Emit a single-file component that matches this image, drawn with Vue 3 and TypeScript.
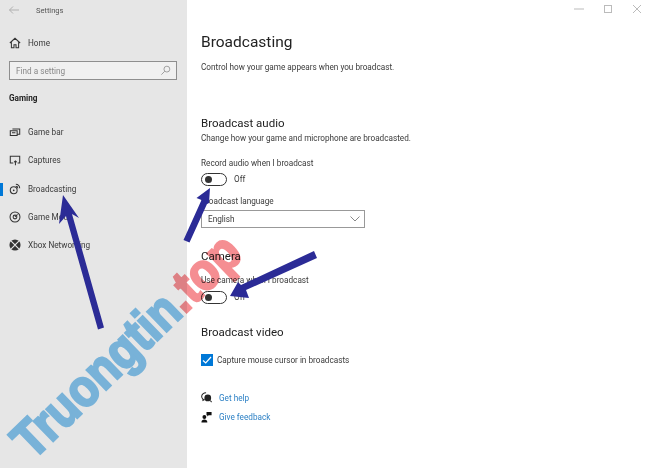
<template>
  <div class="window">
    <aside class="sidebar">
      <div class="titlebar">
        <svg class="back" width="12" height="10" viewBox="0 0 12 10"><path d="M11 5H1.500M5 1.500 1.500 5 5 8.500" fill="none" stroke="#b0b0b0" stroke-width="1"/></svg>
        <span class="app-name">Settings</span>
      </div>
      <div class="home-row">
        <svg class="nav-icon" width="12" height="12" viewBox="0 0 14 14"><path d="M1 7 7 1.500 13 7M2.800 6v6.500h3V9h2.400v3.500h3V6" fill="none" stroke="#333" stroke-width="1.200"/></svg>
        <span>Home</span>
      </div>
      <div class="search">
        <span>Find a setting</span>
        <svg width="11" height="11" viewBox="0 0 12 12"><circle cx="7.500" cy="4.500" r="3.200" fill="none" stroke="#999" stroke-width="1"/><path d="M5.200 6.800 1.500 10.500" stroke="#999" stroke-width="1"/></svg>
      </div>
      <div class="group">Gaming</div>
      <nav class="nav">
        <div v-for="item in navItems" :key="item.label" class="nav-row" :class="{ active: item.active }">
          <svg class="nav-icon" width="12" height="12" viewBox="0 0 14 14" v-html="item.icon"></svg>
          <span>{{ item.label }}</span>
        </div>
      </nav>
    </aside>

    <main class="content">
      <div class="controls">
        <svg width="10" height="10" viewBox="0 0 10 10"><path d="M0 5h10" stroke="#bbb"/></svg>
        <svg width="10" height="10" viewBox="0 0 10 10"><rect x="1.500" y="1.500" width="7" height="7" fill="none" stroke="#bbb"/></svg>
        <svg width="10" height="10" viewBox="0 0 10 10"><path d="M1 1l8 8M9 1 1 9" stroke="#bbb"/></svg>
      </div>
      <h1>Broadcasting</h1>
      <p class="lead">Control how your game appears when you broadcast.</p>

      <h2 class="audio-head">Broadcast audio</h2>
      <p class="small">Change how your game and microphone are broadcasted.</p>
      <p class="label record">Record audio when I broadcast</p>
      <div class="toggle-row">
        <span class="toggle"><i></i></span>
        <span>Off</span>
      </div>
      <p class="label language">Broadcast language</p>
      <div class="select">
        <span>English</span>
        <svg width="10" height="6" viewBox="0 0 10 6"><path d="M.5.500 5 5 9.500.500" fill="none" stroke="#888"/></svg>
      </div>

      <h2 class="camera-head">Camera</h2>
      <p class="label camera">Use camera when I broadcast</p>
      <div class="toggle-row">
        <span class="toggle"><i></i></span>
        <span>Off</span>
      </div>

      <h2 class="video-head">Broadcast video</h2>
      <div class="check-row">
        <span class="check">
          <svg width="12" height="12" viewBox="0 0 12 12"><path d="M2 6.500 4.700 9 10 3" fill="none" stroke="#fff" stroke-width="1.200"/></svg>
        </span>
        <span>Capture mouse cursor in broadcasts</span>
      </div>

      <div class="links">
        <div class="link-row">
          <svg width="11" height="11" viewBox="0 0 13 13"><path d="M6 1C3 1 .8 3 .8 5.300c0 1.200.6 2.200 1.500 3V10l2-1.200" fill="none" stroke="#222" stroke-width="1.200"/><circle cx="8" cy="7" r="4" fill="#222"/><path d="M11 10l1.500 2" stroke="#222" stroke-width="1.200"/></svg>
          <a>Get help</a>
        </div>
        <div class="link-row">
          <svg width="11" height="12" viewBox="0 0 13 14"><circle cx="4" cy="7" r="2.300" fill="#111"/><path d="M.5 13.500c0-2.500 1.500-3.500 3.500-3.500s3.500 1 3.500 3.500z" fill="#111"/><path d="M6.500 1h6v4H9L7.500 6.500V5h-1z" fill="#111"/></svg>
          <a>Give feedback</a>
        </div>
      </div>
    </main>

    <div class="watermark">
      <span class="wm-blue">Truongtin</span><span class="wm-red">.top</span>
    </div>

    <svg class="arrows" width="650" height="468" viewBox="0 0 650 468">
      <g fill="#2b2b96">
        <path d="M98 329.500 104 327.500 72 214 79 218 63 195 59 224 66 216z"/>
        <path d="M183.500 240 189.500 242.500 207 204 209 203 210 188 196.500 198 201.500 200z"/>
        <path d="M314 251 317 258 246 290 249 298 230 296 238 282 241 285z"/>
      </g>
    </svg>
  </div>
</template>

<script setup lang="ts">
interface NavItem {
  label: string
  icon: string
  active?: boolean
}

const stroke = 'fill="none" stroke="#333" stroke-width="1.200"'

const navItems: NavItem[] = [
  {
    label: 'Game bar',
    icon: `<path d="M4 3.500h8.500v6H10M1.500 5.500h8v5.500h-8zM3.500 8h4" ${stroke}/>`
  },
  {
    label: 'Captures',
    icon: `<path d="M5 10.500H1.500v-8h11v8H10M7.500 8v5M6 9.500l1.500-1.500L9 9.500" ${stroke}/>`
  },
  {
    label: 'Broadcasting',
    icon: `<circle cx="5.500" cy="8.500" r="4" ${stroke}/><circle cx="5.500" cy="8.500" r="1" fill="#333"/><path d="M8 1.500a4.500 4.500 0 0 1 4.500 4.500M8 3.700A2.300 2.300 0 0 1 10.300 6" ${stroke}/>`,
    active: true
  },
  {
    label: 'Game Mode',
    icon: `<circle cx="7" cy="7" r="5.800" ${stroke} /><circle cx="7" cy="7" r="2.200" ${stroke}/><path d="M7 7l3-3" ${stroke}/>`
  },
  {
    label: 'Xbox Networking',
    icon: `<circle cx="7" cy="7" r="6.500" fill="#333"/><path d="M2.500 2.500 7 7l4.500-4.500M2.500 11.500 7 7l4.500 4.500" fill="none" stroke="#e6e6e6" stroke-width="1.300"/>`
  }
]
</script>

<style>
body {
  margin: 0;
  background: #fff;
}
</style>

<style scoped>
.window {
  position: relative;
  display: flex;
  width: 650px;
  height: 468px;
  overflow: hidden;
  background: #fff;
  color: #3a3a3a;
  font-family: Roboto, "Open Sans", sans-serif;
  font-size: 8.200px;
}

.sidebar {
  width: 187px;
  flex-shrink: 0;
  background: #e6e6e6;
}

.titlebar {
  display: flex;
  align-items: center;
  height: 20px;
  padding-left: 8px;
}

.back {
  margin-right: 16px;
}

.app-name {
  font-size: 7.500px;
  color: #555;
}

.home-row {
  display: flex;
  align-items: center;
  gap: 7px;
  height: 20px;
  margin-top: 13px;
  padding-left: 9px;
}

.search {
  display: flex;
  align-items: center;
  justify-content: space-between;
  box-sizing: border-box;
  width: 168px;
  height: 19px;
  margin: 8px 0 0 9px;
  padding: 0 5px 0 6px;
  border: 1.500px solid #8e8e8e;
  background: #f0f0f0;
  color: #888;
}

.group {
  margin: 11px 0 0 9px;
  font-weight: 700;
  line-height: 14px;
  color: #222;
}

.nav {
  margin-top: 13px;
}

.nav-row {
  position: relative;
  display: flex;
  align-items: center;
  gap: 7px;
  height: 28.300px;
  padding-left: 9px;
}

.nav-row.active::before {
  content: "";
  position: absolute;
  left: 0;
  top: 8px;
  width: 2.500px;
  height: 13px;
  background: #0078d7;
}

.nav-icon {
  flex-shrink: 0;
}

.content {
  position: relative;
  flex: 1;
  padding-left: 14px;
}

.controls {
  position: absolute;
  top: 4px;
  right: 8px;
  display: flex;
  gap: 19px;
}

h1 {
  margin: 32px 0 0;
  font-size: 15.500px;
  font-weight: 400;
  line-height: 21px;
  color: #222;
}

h2 {
  margin: 0;
  font-size: 11.500px;
  font-weight: 400;
  line-height: 15px;
  color: #222;
}

p {
  margin: 0;
  line-height: 12px;
}

.lead {
  margin-top: 8px;
}

.audio-head {
  margin-top: 43px;
}

.small {
  margin-top: 1px;
}

.record {
  margin-top: 13px;
}

.toggle-row {
  display: flex;
  align-items: center;
  gap: 7px;
  height: 14px;
  margin-top: 3px;
}

.camera + .toggle-row {
  margin-top: 4px;
}

.toggle {
  display: flex;
  align-items: center;
  box-sizing: border-box;
  width: 26px;
  height: 13px;
  padding-left: 3px;
  border: 1.500px solid #333;
  border-radius: 7px;
}

.toggle i {
  width: 7px;
  height: 7px;
  border-radius: 50%;
  background: #333;
}

.language {
  margin-top: 9px;
}

.select {
  display: flex;
  align-items: center;
  justify-content: space-between;
  box-sizing: border-box;
  width: 164px;
  height: 18px;
  margin-top: 3px;
  padding: 0 4px 0 6px;
  border: 1.500px solid #999;
}

.camera-head {
  margin-top: 21px;
}

.camera {
  margin-top: 10px;
}

.video-head {
  margin-top: 21px;
}

.check-row {
  display: flex;
  align-items: center;
  gap: 4px;
  margin-top: 14px;
}

.check {
  display: flex;
  width: 12px;
  height: 12px;
  background: #0078d7;
}

.links {
  margin-top: 22px;
}

.link-row {
  display: flex;
  align-items: center;
  gap: 7px;
  height: 19px;
}

.link-row a {
  color: #2a7fc4;
}

.watermark {
  position: absolute;
  left: 20px;
  top: 422px;
  font-family: "Liberation Sans", sans-serif;
  font-size: 52px;
  font-weight: 700;
  line-height: 1;
  white-space: nowrap;
  mix-blend-mode: multiply;
  -webkit-text-stroke: 2.500px currentColor;
  transform: rotate(-44deg) scaleX(0.88);
  transform-origin: 0 50%;
}

.wm-blue {
  color: #85c6f0;
}

.wm-red {
  color: #f58e92;
}

.arrows {
  position: absolute;
  left: 0;
  top: 0;
  pointer-events: none;
}
</style>
